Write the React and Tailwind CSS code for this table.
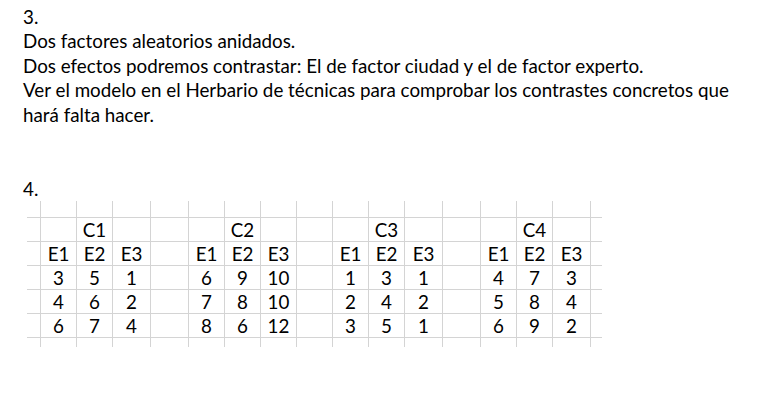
import React from 'react';

const colWidths = [13, 35, 35, 37, 37, 35, 35, 35, 35, 35, 35, 37, 37, 35, 35, 37, 11];

// one row per line of the sheet; '' = empty cell
const groups = [
    { name: 'C1', rows: [[3, 5, 1], [4, 6, 2], [6, 7, 4]] },
    { name: 'C2', rows: [[6, 9, 10], [7, 8, 10], [8, 6, 12]] },
    { name: 'C3', rows: [[1, 3, 1], [2, 4, 2], [3, 5, 1]] },
    { name: 'C4', rows: [[4, 7, 3], [5, 8, 4], [6, 9, 2]] },
];

const buildRows = () => {
    const empty = () => Array(colWidths.length).fill('');
    const rows = [empty(), empty(), empty(), empty(), empty(), empty(), empty()];
    groups.forEach((g, i) => {
        const base = 1 + i * 4;
        rows[1][base + 1] = g.name;
        rows[2][base] = 'E1';
        rows[2][base + 1] = 'E2';
        rows[2][base + 2] = 'E3';
        g.rows.forEach((r, j) => {
            r.forEach((v, k) => {
                rows[3 + j][base + k] = String(v);
            });
        });
    });
    return rows;
};

const Sheet = () => {
    const rows = buildRows();
    return (
        <div className="ml-[4px] grid w-fit grid-cols-[13px_35px_35px_37px_37px_35px_35px_35px_35px_35px_35px_37px_37px_35px_35px_37px_11px] grid-rows-[16px_23px_23px_23px_23px_23px_9px] gap-px bg-[#d4d4d4]">
            {rows.map((row, r) =>
                row.map((cell, c) => (
                    <div key={`${r}-${c}`} className="flex items-end justify-center overflow-hidden bg-white pb-[1px] text-[18.8px] leading-[20px]">
                        {cell}
                    </div>
                ))
            )}
        </div>
    );
};

export default function App() {
    return (
        <div className="min-h-[402px] w-[762px] bg-white pl-[23px] pt-[4.5px] text-black" style={{ fontFamily: 'Lato, "Liberation Sans", sans-serif' }}>
            <div className="text-[18.8px] leading-[24.5px]">
                <p>3.</p>
                <p>Dos factores aleatorios anidados.</p>
                <p>Dos efectos podremos contrastar: El de factor ciudad y el de factor experto.</p>
                <p>Ver el modelo en el Herbario de técnicas para comprobar los contrastes concretos que</p>
                <p>hará falta hacer.</p>
                <p className="mt-[49.5px]">4.</p>
            </div>
            <Sheet />
        </div>
    );
}
